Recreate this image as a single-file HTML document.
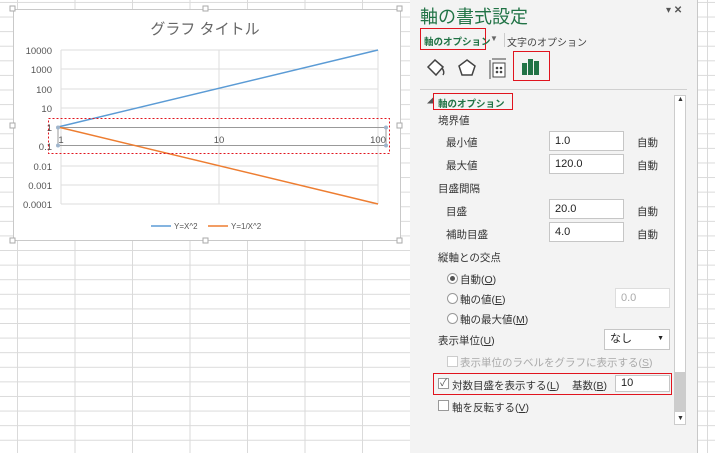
<!DOCTYPE html>
<html><head><meta charset="utf-8"><style>
*{margin:0;padding:0;box-sizing:border-box}
body{width:715px;height:453px;overflow:hidden;position:relative;background:#fff;font-family:"Liberation Sans","Noto Sans CJK JP",sans-serif;
background-image:linear-gradient(90deg,transparent 17px,#dadada 17px,#dadada 18px,transparent 18px),linear-gradient(180deg,transparent 2px,#dadada 2px,#dadada 3px,transparent 3px);
background-size:57.5px 100%,100% 14.6px;}
.a{position:absolute}
.p{position:absolute;left:410px;top:0;width:288px;height:453px;background:#f3f3f3;border-right:1px solid #c8c8c8;font-size:10.5px;color:#333}
.t{position:absolute;white-space:nowrap}
.in{position:absolute;left:139px;width:75px;height:20px;background:#fff;border:1px solid #c6c6c6;font-size:11px;padding:0 5px;line-height:18px;color:#222}
.rb{position:absolute;border:1.5px solid #e0141e}
.rad{position:absolute;width:11px;height:11px;border:1px solid #999;border-radius:50%;background:#fff}
.cb{position:absolute;width:11px;height:11px;border:1px solid #999;background:#fff}
</style></head><body>
<div class="a" style="left:13px;top:9px;width:388px;height:232px;background:#fff;border:1px solid #c9c9c9"></div>
<svg class="a" style="left:0;top:0" width="410" height="250">
<g fill="#fff" stroke="#aaa"><rect x="10" y="6" width="5" height="5"/><rect x="203" y="6" width="5" height="5"/><rect x="397" y="6" width="5" height="5"/><rect x="10" y="123" width="5" height="5"/><rect x="397" y="123" width="5" height="5"/><rect x="10" y="238" width="5" height="5"/><rect x="203" y="238" width="5" height="5"/><rect x="397" y="238" width="5" height="5"/></g>
<g stroke="#dedede"><line x1="61" x2="378" y1="50" y2="50"/><line x1="61" x2="378" y1="69" y2="69"/><line x1="61" x2="378" y1="89" y2="89"/><line x1="61" x2="378" y1="108" y2="108"/><line x1="61" x2="378" y1="166" y2="166"/><line x1="61" x2="378" y1="185" y2="185"/><line x1="61" x2="378" y1="204" y2="204"/><line x1="219" x2="219" y1="50" y2="204"/><line x1="378" x2="378" y1="50" y2="204"/><line x1="61" x2="61" y1="50" y2="204"/></g>
<g stroke="#999"><line x1="58" x2="386" y1="127.5" y2="127.5"/><line x1="58" x2="386" y1="145.5" y2="145.5"/><line x1="58" x2="58" y1="127" y2="146"/><line x1="386" x2="386" y1="127" y2="146"/></g>
<line x1="58" y1="127" x2="378" y2="50" stroke="#5b9bd5" stroke-width="1.5"/>
<line x1="58" y1="127" x2="378" y2="204" stroke="#ed7d31" stroke-width="1.5"/>
<g fill="#9fb5cc"><circle cx="58" cy="127.5" r="2"/><circle cx="58" cy="145.5" r="2"/><circle cx="386" cy="127.5" r="2"/><circle cx="386" cy="145.5" r="2"/></g>
<rect x="48.5" y="118.5" width="341" height="35" fill="none" stroke="#e0141e" stroke-dasharray="2,2"/>
<text x="205" y="34" font-size="15" fill="#666" text-anchor="middle" font-family="Liberation Sans,Noto Sans CJK JP,sans-serif">グラフ タイトル</text>
<g font-size="9.5" fill="#555" text-anchor="end" font-family="Liberation Sans,sans-serif"><text x="52" y="54">10000</text><text x="52" y="73">1000</text><text x="52" y="93">100</text><text x="52" y="112">10</text><text x="52" y="131">1</text><text x="52" y="150">0.1</text><text x="52" y="170">0.01</text><text x="52" y="189">0.001</text><text x="52" y="208">0.0001</text></g>
<g font-size="9.5" fill="#555" text-anchor="middle" font-family="Liberation Sans,sans-serif"><text x="61" y="143">1</text><text x="219" y="143">10</text><text x="378" y="143">100</text></g>
<line x1="151" x2="171" y1="226" y2="226" stroke="#5b9bd5" stroke-width="1.5"/><text x="174" y="229" font-size="8" fill="#555" font-family="Liberation Sans,sans-serif">Y=X^2</text>
<line x1="208" x2="228" y1="226" y2="226" stroke="#ed7d31" stroke-width="1.5"/><text x="231" y="229" font-size="8" fill="#555" font-family="Liberation Sans,sans-serif">Y=1/X^2</text>
</svg>
<div class="p">
<div class="t" style="left:10px;top:3px;font-size:18px;color:#217346">軸の書式設定</div>
<div class="t" style="left:256px;top:5px;font-size:10px;color:#555">▾ <b>✕</b></div>
<div class="rb" style="left:10px;top:28px;width:66px;height:22px"></div>
<div class="t" style="left:14px;top:34px;font-size:9.5px;font-weight:bold;color:#217346">軸のオプション</div>
<div class="t" style="left:80px;top:34px;font-size:8px;color:#666">▼</div>
<div class="a" style="left:94px;top:33px;width:1px;height:14px;background:#ccc"></div>
<div class="t" style="left:97px;top:34px;font-size:10px;color:#444">文字のオプション</div>
<svg class="a" style="left:14px;top:55px" width="130" height="28">
<path d="M4 12 L11 5 L19 12 L12 20 Z" fill="#fff" stroke="#444" stroke-width="1.5"/><path d="M18 13 q3 4 1 7" fill="none" stroke="#444" stroke-width="1.5"/>
<path d="M43 5 L51 11 L48 20 L38 20 L35 11 Z" fill="#fff" stroke="#444" stroke-width="1.5"/>
<rect x="69" y="8" width="12" height="14" fill="#fff" stroke="#444"/><line x1="66" y1="5" x2="66" y2="24" stroke="#444"/><line x1="68" y1="4" x2="82" y2="4" stroke="#444"/><circle cx="73" cy="13" r="1.3" fill="#444"/><circle cx="77" cy="17" r="1.3" fill="#444"/><circle cx="73" cy="17" r="1.3" fill="#444"/><circle cx="77" cy="13" r="1.3" fill="#444"/>
<rect x="98" y="8" width="5" height="12" fill="#217346"/><rect x="104" y="4" width="5" height="16" fill="#217346"/><rect x="110" y="6" width="5" height="14" fill="#217346"/>
</svg>
<div class="rb" style="left:103px;top:51px;width:37px;height:30px"></div>
<div class="a" style="left:10px;top:89px;width:267px;height:1px;background:#d0d0d0"></div>
<div class="t" style="left:17px;top:96px;font-size:6px;color:#555">◢</div>
<div class="rb" style="left:23px;top:93px;width:80px;height:17px"></div>
<div class="t" style="left:28px;top:96px;font-size:9.5px;font-weight:bold;color:#217346">軸のオプション</div>
<div class="a" style="left:264px;top:95px;width:12px;height:330px;background:#fff;border:1px solid #ccc"></div>
<div class="a" style="left:265px;top:372px;width:10px;height:40px;background:#ccc"></div>
<div class="t" style="left:267px;top:96px;font-size:7px">▲</div>
<div class="t" style="left:267px;top:415px;font-size:7px">▼</div>
<div class="t" style="left:28px;top:113px">境界値</div>
<div class="t" style="left:36px;top:135px">最小値</div><div class="in" style="top:131px">1.0</div><div class="t" style="left:227px;top:135px">自動</div>
<div class="t" style="left:36px;top:158px">最大値</div><div class="in" style="top:154px">120.0</div><div class="t" style="left:227px;top:158px">自動</div>
<div class="t" style="left:28px;top:181px">目盛間隔</div>
<div class="t" style="left:36px;top:204px">目盛</div><div class="in" style="top:199px">20.0</div><div class="t" style="left:227px;top:204px">自動</div>
<div class="t" style="left:36px;top:227px">補助目盛</div><div class="in" style="top:222px">4.0</div><div class="t" style="left:227px;top:227px">自動</div>
<div class="t" style="left:28px;top:250px">縦軸との交点</div>
<div class="rad" style="left:37px;top:273px"><div style="width:5px;height:5px;border-radius:50%;background:#555;margin:2px"></div></div><div class="t" style="left:50px;top:272px">自動(<u>O</u>)</div>
<div class="rad" style="left:37px;top:293px"></div><div class="t" style="left:50px;top:292px">軸の値(<u>E</u>)</div>
<div class="in" style="left:205px;top:288px;width:55px;color:#aaa;border-color:#ddd">0.0</div>
<div class="rad" style="left:37px;top:313px"></div><div class="t" style="left:50px;top:312px">軸の最大値(<u>M</u>)</div>
<div class="t" style="left:28px;top:333px">表示単位(<u>U</u>)</div>
<div class="in" style="left:194px;top:329px;width:66px;height:21px">なし<span style="float:right;font-size:7px">▼</span></div>
<div class="cb" style="left:37px;top:356px;border-color:#ccc"></div><div class="t" style="left:50px;top:355px;color:#aaa">表示単位のラベルをグラフに表示する(<u>S</u>)</div>
<div class="rb" style="left:23px;top:373px;width:239px;height:22px"></div>
<div class="cb" style="left:28px;top:378px;font-size:10px;line-height:9px;text-align:center;color:#555">✓</div><div class="t" style="left:42px;top:378px">対数目盛を表示する(<u>L</u>)</div>
<div class="t" style="left:162px;top:378px">基数(<u>B</u>)</div>
<div class="in" style="left:205px;top:375px;width:55px;height:17px;line-height:15px">10</div>
<div class="cb" style="left:28px;top:400px"></div><div class="t" style="left:42px;top:400px">軸を反転する(<u>V</u>)</div>
</div>
</body></html>
